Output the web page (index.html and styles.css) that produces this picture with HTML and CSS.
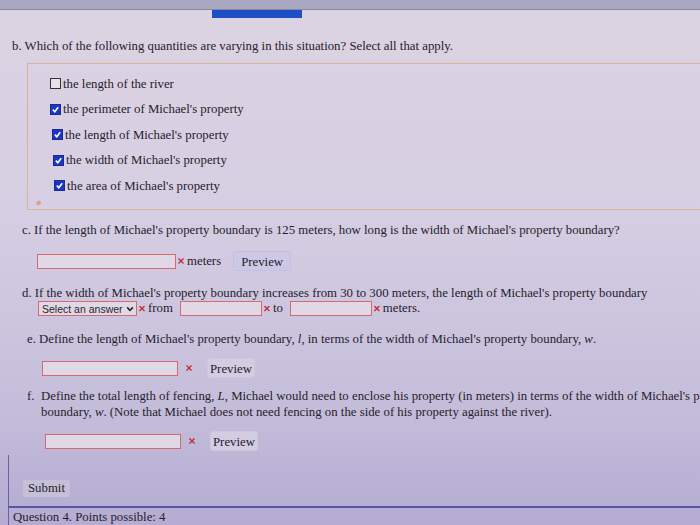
FILE: index.html
```html
<!DOCTYPE html>
<html>
<head>
<meta charset="utf-8">
<link rel="stylesheet" href="styles.css">
</head>
<body>
<div class="topbar"><div class="progress"></div></div>
<div class="page">
  <p class="q q-b">b. Which of the following quantities are varying in this situation? Select all that apply.</p>
  <div class="choices">
    <label class="choice c1"><span class="cb"></span>the length of the river</label>
    <label class="choice c2"><span class="cb on"><svg viewBox="0 0 10 10"><path d="M2 5.2 L4.2 7.4 L8 2.6" fill="none" stroke="#fff" stroke-width="1.8"/></svg></span>the perimeter of Michael's property</label>
    <label class="choice c3"><span class="cb on"><svg viewBox="0 0 10 10"><path d="M2 5.2 L4.2 7.4 L8 2.6" fill="none" stroke="#fff" stroke-width="1.8"/></svg></span>the length of Michael's property</label>
    <label class="choice c4"><span class="cb on"><svg viewBox="0 0 10 10"><path d="M2 5.2 L4.2 7.4 L8 2.6" fill="none" stroke="#fff" stroke-width="1.8"/></svg></span>the width of Michael's property</label>
    <label class="choice c5"><span class="cb on"><svg viewBox="0 0 10 10"><path d="M2 5.2 L4.2 7.4 L8 2.6" fill="none" stroke="#fff" stroke-width="1.8"/></svg></span>the area of Michael's property</label>
    <span class="mark"></span>
  </div>

  <p class="q q-c">c. If the length of Michael's property boundary is 125 meters, how long is the width of Michael's property boundary?</p>
  <div class="row row-c">
    <span class="inp w139"></span><span class="x"></span><span class="unit">meters</span><span class="btn">Preview</span>
  </div>

  <p class="q q-d">d. If the width of Michael's property boundary increases from 30 to 300 meters, the length of Michael's property boundary</p>
  <div class="row row-d">
    <span class="sel">Select an answer <svg class="chev" viewBox="0 0 10 10"><path d="M1.5 3 L5 6.8 L8.5 3" fill="none" stroke="#222" stroke-width="2"/></svg></span><span class="x"></span><span class="unit">from</span><span class="inp w82 gap1"></span><span class="x"></span><span class="unit">to</span><span class="inp w82 gap2"></span><span class="x"></span><span class="unit">meters.</span>
  </div>

  <p class="q q-e">e. Define the length of Michael's property boundary, <i>l</i>, in terms of the width of Michael's property boundary, <i>w</i>.</p>
  <div class="row row-e">
    <span class="inp w136"></span><span class="x xs"></span><span class="btn flat">Preview</span>
  </div>

  <div class="q q-f">
    <span class="lbl">f.</span>
    <span class="ftxt"><span class="fl">Define the total length of fencing, <i>L</i>, Michael would need to enclose his property (in meters) in terms of the width of Michael's property</span><span class="fl">boundary, <i>w</i>. (Note that Michael does not need fencing on the side of his property against the river).</span></span>
  </div>
  <div class="row row-f">
    <span class="inp w136"></span><span class="x xs"></span><span class="btn flat">Preview</span>
  </div>

  <div class="foot">
    <span class="submit">Submit</span>
  </div>
</div>
<div class="next">Question 4. Points possible: 4</div>
</body>
</html>
```
FILE: styles.css
```css
html, body {
  margin: 0;
  padding: 0;
}
body {
  width: 700px;
  height: 525px;
  overflow: hidden;
  background: linear-gradient(180deg, #dcd3e2 0%, #d6cee2 40%, #c6bfdb 75%, #b4acd2 100%);
  font-family: "Liberation Serif", "Times New Roman", serif;
  font-size: 12.8px;
  color: #26222c;
}
.topbar {
  height: 9px;
  background: #a9a6c2;
  border-bottom: 1px solid #8c879f;
  position: relative;
}
.progress {
  position: absolute;
  left: 212px;
  top: 10px;
  width: 90px;
  height: 8px;
  background: #1c4fc6;
}
.page {
  padding-left: 12px;
}
.q {
  margin: 0;
  line-height: 14px;
}
.q-b {
  padding-top: 29px;
}
.choices {
  margin: 10px 0 0 15px;
  border: 1px solid #d7b596;
  border-right: none;
  height: 147px;
  position: relative;
  padding-top: 7px;
  box-sizing: border-box;
}
.choice {
  display: flex;
  align-items: center;
  height: 25.5px;
  line-height: 14px;
}
.c1 { padding-left: 22px; }
.c2 { padding-left: 22px; }
.c3 { padding-left: 24px; }
.c4 { padding-left: 25px; }
.c5 { padding-left: 26px; }
.cb {
  width: 11px;
  height: 11px;
  border: 1px solid #333;
  box-sizing: border-box;
  margin-right: 2px;
  background: #e8e2ec;
  display: inline-flex;
}
.cb.on {
  background: #1b35c4;
  border-color: #1b2a90;
}
.cb svg {
  width: 100%;
  height: 100%;
}
.mark {
  position: absolute;
  left: 8px;
  top: 137px;
  width: 5px;
  height: 4px;
  background: #e0a088;
  border-radius: 2px;
  transform: rotate(-30deg);
}
.q-c {
  margin: 13px 0 0 10px;
}
.row {
  display: flex;
  align-items: center;
  height: 20px;
}
.row-c {
  margin: 14px 0 0 25px;
}
.inp {
  height: 15px;
  border: 1px solid #d56a72;
  box-sizing: border-box;
  background: #e0d8e4;
}
.w139 { width: 139px; }
.w136 { width: 136px; }
.w82 { width: 82px; }
.x {
  width: 6px;
  height: 6px;
  background: #c8283a;
  margin: 0 3px 0 2px;
  clip-path: polygon(0 15%, 15% 0, 50% 35%, 85% 0, 100% 15%, 65% 50%, 100% 85%, 85% 100%, 50% 65%, 15% 100%, 0 85%, 35% 50%);
}
.x.xs {
  margin: 0 15px 0 8px;
}
.unit {
  margin-right: 4px;
}
.row-c .unit {
  margin-right: 0;
}
.btn {
  height: 20px;
  line-height: 20px;
  padding: 0 7px;
  background: #cdc8e6;
  border: 1px solid #c4bfdc;
  border-radius: 3px;
  box-sizing: border-box;
  margin-left: 12px;
}
.btn.flat {
  margin-left: 0;
  padding: 0 2px;
  background: #d3cde3;
  border-color: #cdc7de;
}
.q-d {
  margin: 15px 0 0 10px;
}
.row-d {
  margin: 1px 0 0 26px;
  height: 15px;
}
.sel {
  width: 99px;
  height: 15px;
  border: 1px solid #d56a72;
  box-sizing: border-box;
  display: flex;
  align-items: center;
  padding-left: 3px;
  font-family: "Liberation Sans", Arial, sans-serif;
  font-size: 10.5px;
  color: #2a2630;
  background: #e0d8e4;
}
.chev {
  width: 8px;
  height: 8px;
  margin-left: 3px;
}
.row-d .unit {
  margin-right: 3px;
}
.gap1 {
  margin-left: 4px;
}
.gap2 {
  margin-left: 4px;
}
.q-e {
  margin: 16px 0 0 15px;
}
.row-e {
  margin: 12px 0 0 30px;
}
.q-f {
  margin: 10px 0 0 15px;
  display: flex;
  width: 673px;
  overflow: hidden;
}
.lbl {
  width: 14px;
  flex: none;
  line-height: 16px;
}
.ftxt {
  line-height: 16px;
  display: flex;
  flex-direction: column;
  min-width: 0;
}
.fl {
  white-space: nowrap;
}
.row-f {
  margin: 11px 0 0 33px;
}
.foot {
  margin: 4px 0 0 -4px;
  border-left: 1px solid #6a62a4;
  height: 51px;
  padding-top: 25px;
  box-sizing: border-box;
  padding-left: 14px;
}
.submit {
  display: inline-block;
  height: 17px;
  line-height: 17px;
  padding: 0 5px;
  background: #c6bfd8;
  border-radius: 2px;
}
.next {
  margin-left: 8px;
  border-top: 2px solid #5a52a8;
  border-left: 1px solid #6a62a4;
  padding: 3px 0 0 4px;
  height: 20px;
  line-height: 13px;
}
```
